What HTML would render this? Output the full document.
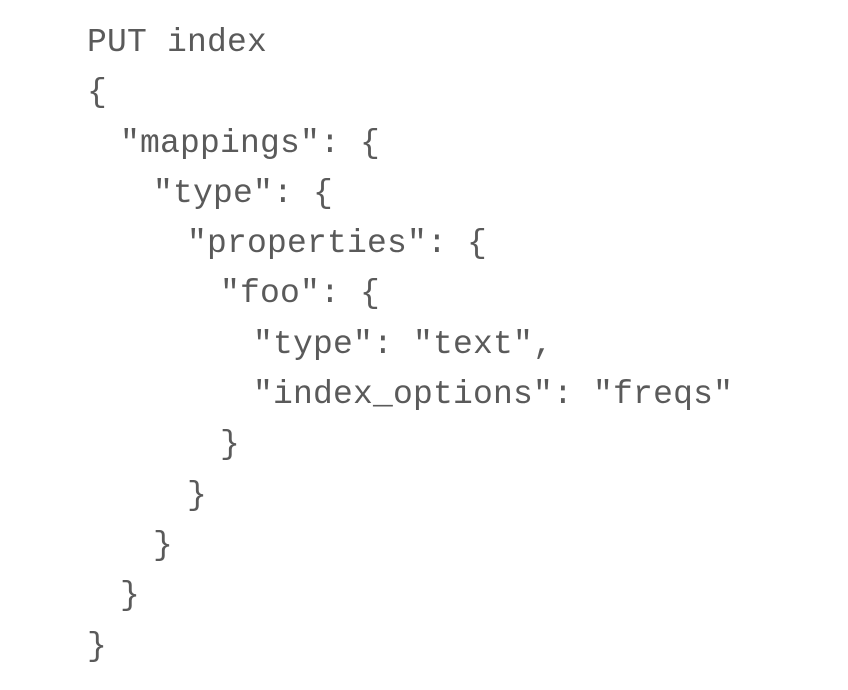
<!DOCTYPE html>
<html><head><style>
html,body{margin:0;padding:0;background:#fff;width:848px;height:690px;overflow:hidden}
pre{position:absolute;left:87px;top:18px;margin:0;font-family:"Liberation Mono",monospace;font-size:33px;line-height:50.3px;color:#5a5a5a;letter-spacing:0.2px}
.l1{padding-left:33px}.l2{padding-left:66px}.l3{padding-left:100px}.l4{padding-left:133px}.l5{padding-left:166px}
div{white-space:pre}
</style></head><body>
<pre><div>PUT index</div><div>{</div><div class="l1">"mappings": {</div><div class="l2">"type": {</div><div class="l3">"properties": {</div><div class="l4">"foo": {</div><div class="l5">"type": "text",</div><div class="l5">"index_options": "freqs"</div><div class="l4">}</div><div class="l3">}</div><div class="l2">}</div><div class="l1">}</div><div>}</div></pre>
</body></html>
